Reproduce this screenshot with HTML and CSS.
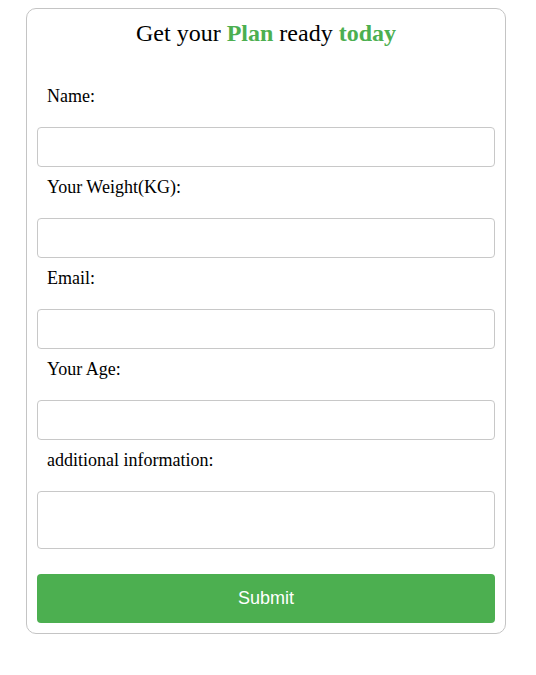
FILE: index.html
```html
<!DOCTYPE html>
<html>
<head>
<meta charset="utf-8">
<link rel="stylesheet" href="styles.css">
</head>
<body>
<form class="card">
  <h2 class="title">Get your <b class="hl">Plan</b> ready <b class="hl">today</b></h2>
  <label class="label" for="name">Name:</label>
  <input class="field" type="text" id="name">
  <label class="label" for="weight">Your Weight(KG):</label>
  <input class="field" type="text" id="weight">
  <label class="label" for="email">Email:</label>
  <input class="field" type="text" id="email">
  <label class="label" for="age">Your Age:</label>
  <input class="field" type="text" id="age">
  <label class="label" for="info">additional information:</label>
  <textarea class="field area" id="info"></textarea>
  <button class="submit" type="button">Submit</button>
</form>
</body>
</html>
```
FILE: styles.css
```css
body {
  margin: 8px;
  font-family: "Liberation Serif", "Times New Roman", serif;
  color: #000;
  background: #fff;
}
.card {
  width: 480px;
  box-sizing: border-box;
  margin: 0 0 0 18px;
  padding: 10px;
  border: 1px solid #c4c4c4;
  border-radius: 10px;
}
.title {
  margin: 0 0 29px;
  font-size: 24px;
  line-height: 28px;
  font-weight: normal;
  text-align: center;
}
.hl {
  color: #4caf50;
  font-weight: bold;
}
.label {
  display: block;
  padding: 10px 10px 20px;
  font-size: 18px;
  line-height: 21px;
}
.field {
  display: block;
  width: 100%;
  height: 40px;
  box-sizing: border-box;
  margin: 0;
  padding: 8px 12px;
  border: 1px solid #c8c8c8;
  border-radius: 4px;
  background: #fff;
  font-family: "Liberation Sans", Arial, sans-serif;
  font-size: 16px;
}
.area {
  height: 58px;
  resize: none;
}
.submit {
  display: block;
  width: 100%;
  height: 49px;
  margin: 25px 0 0;
  border: none;
  border-radius: 4px;
  background: #4caf50;
  color: #fff;
  font-family: "Liberation Sans", Arial, sans-serif;
  font-size: 18px;
}
```
